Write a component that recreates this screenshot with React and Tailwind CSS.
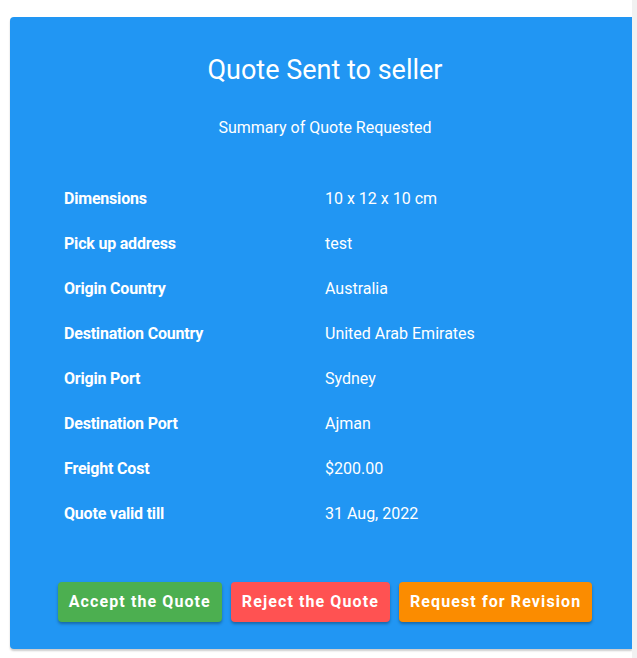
import React from "react";

const rows = [
  ["Dimensions", "10 x 12 x 10 cm"],
  ["Pick up address", "test"],
  ["Origin Country", "Australia"],
  ["Destination Country", "United Arab Emirates"],
  ["Origin Port", "Sydney"],
  ["Destination Port", "Ajman"],
  ["Freight Cost", "$200.00"],
  ["Quote valid till", "31 Aug, 2022"],
];

const App = () => {
  return (
    <div className="flex w-[637px] h-[658px] bg-white font-['Roboto',sans-serif] overflow-hidden">
      <div className="flex-1 pt-[17px] pl-[10px]">
        {/* Card */}
        <div className="w-[622px] h-[632px] bg-[#2196F3] rounded-l-[4px] shadow-[0_2px_2px_rgba(0,0,0,0.2)] text-white pl-[8px] flex flex-col">
          <h1 className="text-[27px] leading-[32px] text-center mt-[37px]">Quote Sent to seller</h1>
          <p className="text-[16px] leading-[20px] text-center mt-[32px]">Summary of Quote Requested</p>

          {/* Summary table */}
          <div className="mt-[38px] flex flex-col pl-[46px]">
            {rows.map(([label, value]) => (
              <div key={label} className="flex h-[45px] items-center text-[16px]">
                <span className="w-[261px] font-bold tracking-[-0.2px]">{label}</span>
                <span>{value}</span>
              </div>
            ))}
          </div>

          {/* Actions */}
          <div className="flex justify-center gap-[9px] mt-[46px]">
            <button className="h-[40px] px-[11px] rounded-[4px] bg-[#4CAF50] text-[16px] font-bold tracking-[1.1px] shadow-[0_2px_3px_rgba(0,0,0,0.3)]">
              Accept the Quote
            </button>
            <button className="h-[40px] px-[11px] rounded-[4px] bg-[#FF5252] text-[16px] font-bold tracking-[1.1px] shadow-[0_2px_3px_rgba(0,0,0,0.3)]">
              Reject the Quote
            </button>
            <button className="h-[40px] px-[11px] rounded-[4px] bg-[#FB8C00] text-[16px] font-bold tracking-[1.1px] shadow-[0_2px_3px_rgba(0,0,0,0.3)]">
              Request for Revision
            </button>
          </div>
        </div>
      </div>
      <div className="w-[5px] h-full bg-[#f1f1f1]" />
    </div>
  );
};

export default App;
